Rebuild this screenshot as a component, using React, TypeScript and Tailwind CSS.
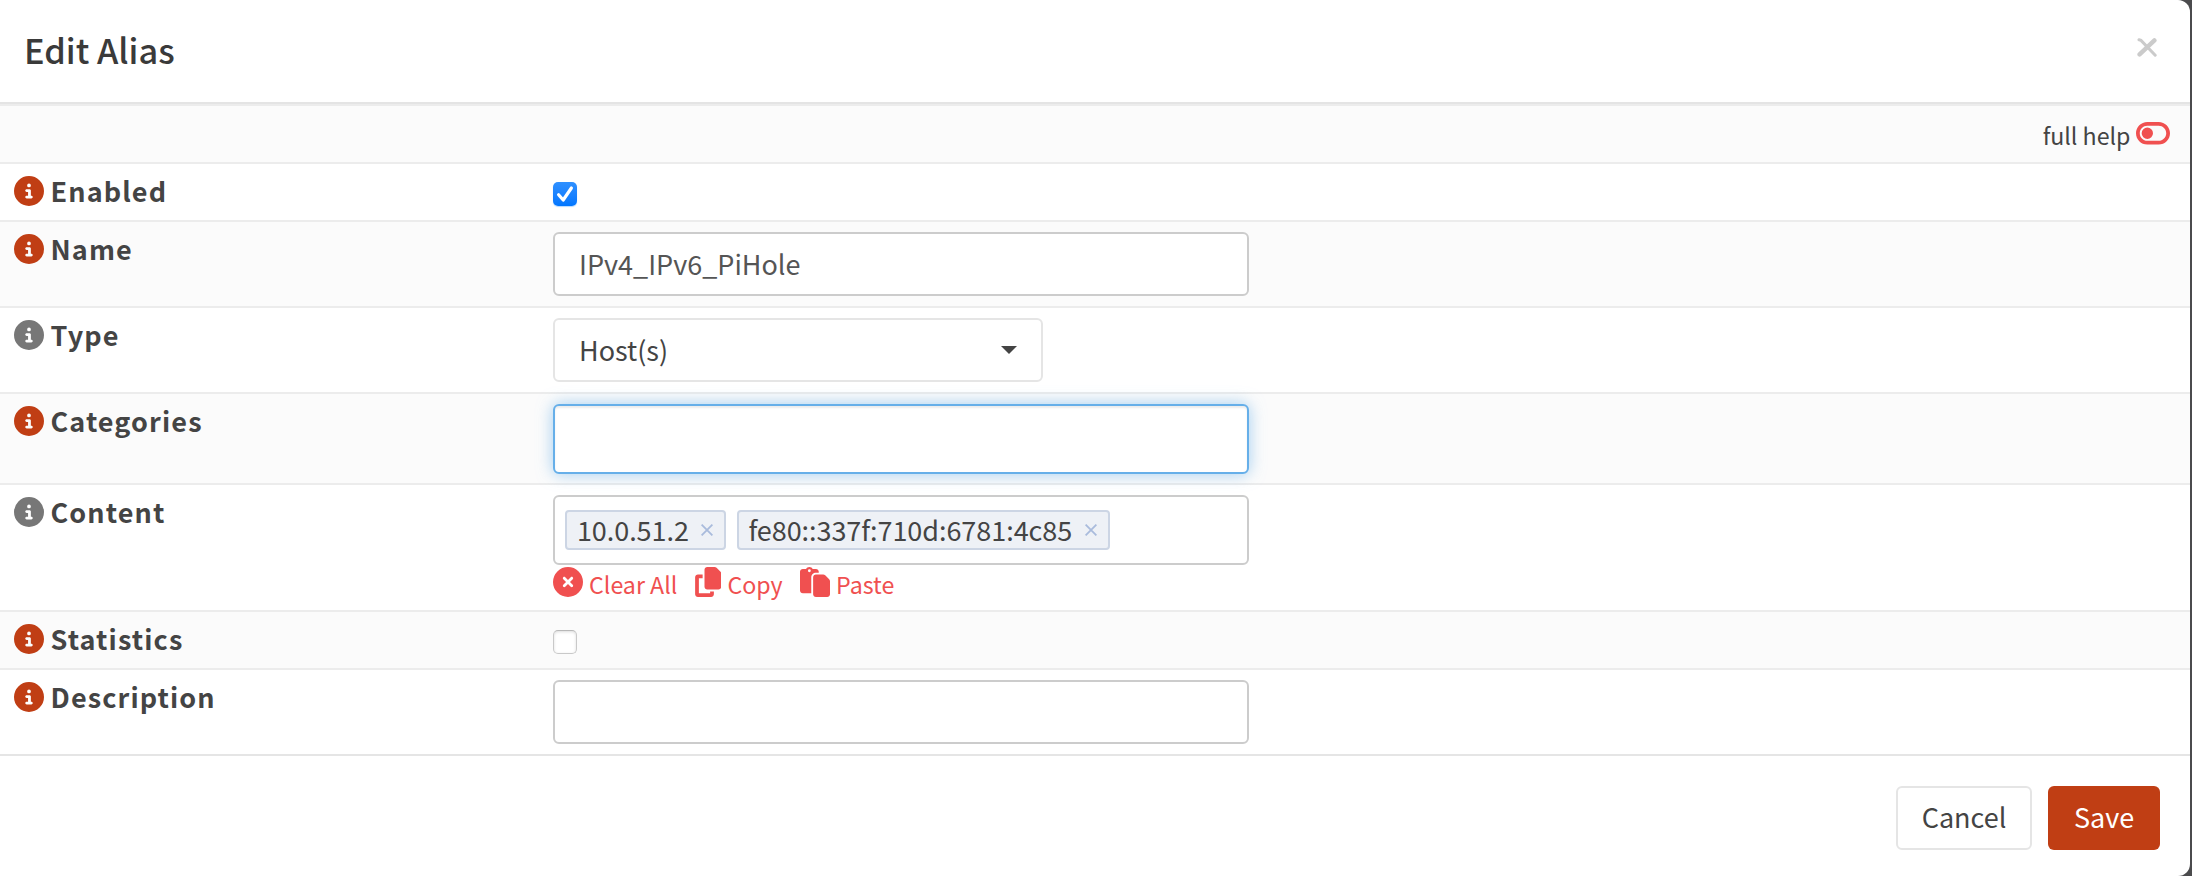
import type { ReactNode } from 'react';
import { FaCircleInfo, FaCircleXmark, FaCopy, FaPaste, FaToggleOff } from 'react-icons/fa6';

type RowProps = {
  label: string;
  required?: boolean;
  striped?: boolean;
  height: string;
  children: ReactNode;
};

function Row({ label, required = false, striped = false, height, children }: RowProps) {
  return (
    <div className={`flex items-start border-t-2 border-[#ececec] ${height} ${striped ? 'bg-[#fbfbfb]' : 'bg-white'}`}>
      <div className="flex w-[553px] shrink-0 items-start pl-3.5">
        <FaCircleInfo className={`mt-[11.6px] size-[30px] shrink-0 ${required ? 'text-[#c03e14]' : 'text-[#777777]'}`} />
        <span className="mt-[7px] ml-[6.5px] text-[27px] leading-10 font-bold tracking-[1.12px] text-[#444444]">{label}</span>
      </div>
      {children}
    </div>
  );
}

function Cross({ className }: { className: string }) {
  return (
    <svg viewBox="0 0 12 12" className={className} fill="none" stroke="currentColor" strokeWidth="1.8">
      <path d="M0.6 0.6 L11.4 11.4 M11.4 0.6 L0.6 11.4" />
    </svg>
  );
}

function Tag({ text }: { text: string }) {
  return (
    <span className="flex h-10 items-center rounded border-2 border-[#ccd5e4] bg-[#eef1f6] pr-[11px] pl-[9.5px]">
      <span className="text-[27px] leading-9 tracking-[-0.05px] text-[#444444]">{text}</span>
      <Cross className="ml-[12.5px] size-3 text-[#a9bbdc]" />
    </span>
  );
}

export default function App() {
  return (
    <div className="flex h-[876px] w-[2192px] overflow-hidden bg-[#4b4b4d] font-['Noto_Sans_CJK_SC','Noto_Sans',sans-serif]">
      <div className="flex w-[2190px] flex-col rounded-r-xl bg-white">
        <header className="flex h-[104px] shrink-0 items-start justify-between border-b-2 border-[#e4e4e4] pr-[33px] pl-6">
          <h1 className="mt-[21px] text-[34.3px] leading-[56px] font-medium text-[#3a3a3a]">Edit Alias</h1>
          <svg viewBox="0 0 20 19" className="mt-[37.5px] h-[19px] w-5" fill="none" stroke="#cbcbcb" strokeWidth="4.4" strokeLinecap="round">
            <path d="M2 1.8 L4 2.4 L18.2 17.2" strokeWidth="3" />
            <path d="M17.4 2.4 L2.6 16.4" />
          </svg>
        </header>

        <div className="flex h-[58px] shrink-0 items-start justify-end border-t-2 border-[#ececec] bg-[#fbfbfb] pr-5">
          <span className="mt-[8.5px] text-[23.2px] leading-10 text-[#444444]">full help</span>
          <FaToggleOff className="mt-3 ml-[5.5px] h-[30.5px] w-[34px] text-[#f05050]" />
        </div>

        <Row label="Enabled" required height="h-[58px]">
          <span className="mt-[18px] flex size-6 items-center justify-center rounded-[5px] bg-linear-to-b from-[#2e90ff] to-[#0076ff] shadow-[0_1px_1px_rgba(0,122,255,0.3)]">
            <svg viewBox="0 0 24 24" className="size-6" fill="none" stroke="white" strokeWidth="3.2" strokeLinecap="round" strokeLinejoin="round">
              <path d="M5.6 12.8 L10.2 18 L18.4 6" />
            </svg>
          </span>
        </Row>

        <Row label="Name" required striped height="h-[86px]">
          <div className="mt-2.5 flex h-16 w-[696px] items-center rounded-md border-2 border-[#cccccc] bg-white pl-6">
            <span className="text-[27px] leading-10 text-[#555555]">IPv4_IPv6_PiHole</span>
          </div>
        </Row>

        <Row label="Type" height="h-[86px]">
          <div className="mt-2.5 flex h-16 w-[490px] items-center justify-between rounded-md border-2 border-[#e5e5e5] bg-white pr-6 pl-6">
            <span className="-mt-px text-[27px] leading-10 text-[#444444]">Host(s)</span>
            <svg viewBox="0 0 16 8" className="h-2 w-4" fill="#444444">
              <path d="M0 0 H16 L8 8 Z" />
            </svg>
          </div>
        </Row>

        <Row label="Categories" required striped height="h-[91px]">
          <div className="z-10 mt-2.5 h-[70px] w-[696px] rounded-md border-2 border-[#66afe9] bg-white shadow-[inset_0_2px_2px_rgba(0,0,0,0.075),0_0_16px_rgba(102,175,233,0.6)]" />
        </Row>

        <Row label="Content" height="h-[127px]">
          <div className="mt-2.5 flex flex-col">
            <div className="flex h-[70px] w-[696px] items-center gap-[10.5px] rounded-md border-2 border-[#cccccc] bg-white pl-[10.4px]">
              <Tag text="10.0.51.2" />
              <Tag text="fe80::337f:710d:6781:4c85" />
            </div>
            <div className="flex h-10 items-start text-[#f05050]">
              <FaCircleXmark className="mt-[1.5px] size-[30px]" />
              <span className="-mt-px ml-1.5 text-[23.2px] leading-10">Clear All</span>
              <FaCopy className="mt-[1.5px] ml-[17.5px] h-[30px] w-[26.5px]" />
              <span className="-mt-px ml-1.5 text-[23.2px] leading-10">Copy</span>
              <FaPaste className="mt-[1.5px] ml-[17.5px] size-[30px]" />
              <span className="-mt-px ml-1.5 text-[23.2px] leading-10">Paste</span>
            </div>
          </div>
        </Row>

        <Row label="Statistics" required striped height="h-[58px]">
          <span className="mt-[18px] size-6 rounded-[5px] border border-[#c9c9c9] border-t-[#b8b8b8] bg-white shadow-[inset_0_1px_3px_rgba(0,0,0,0.14)]" />
        </Row>

        <Row label="Description" required height="h-[86px]">
          <div className="mt-2.5 h-16 w-[696px] rounded-md border-2 border-[#cccccc] bg-white" />
        </Row>

        <footer className="flex grow items-start justify-end gap-4 border-t-2 border-[#e5e5e5] pt-[30px] pr-[30px]">
          <button className="h-16 w-[136px] rounded-md border-2 border-[#e5e5e5] bg-white pb-0.5 text-[27px] leading-[58px] text-[#444444]">Cancel</button>
          <button className="h-16 w-28 rounded-md bg-[#c03e14] pb-0.5 text-[27px] leading-[62px] text-white">Save</button>
        </footer>
      </div>
    </div>
  );
}
